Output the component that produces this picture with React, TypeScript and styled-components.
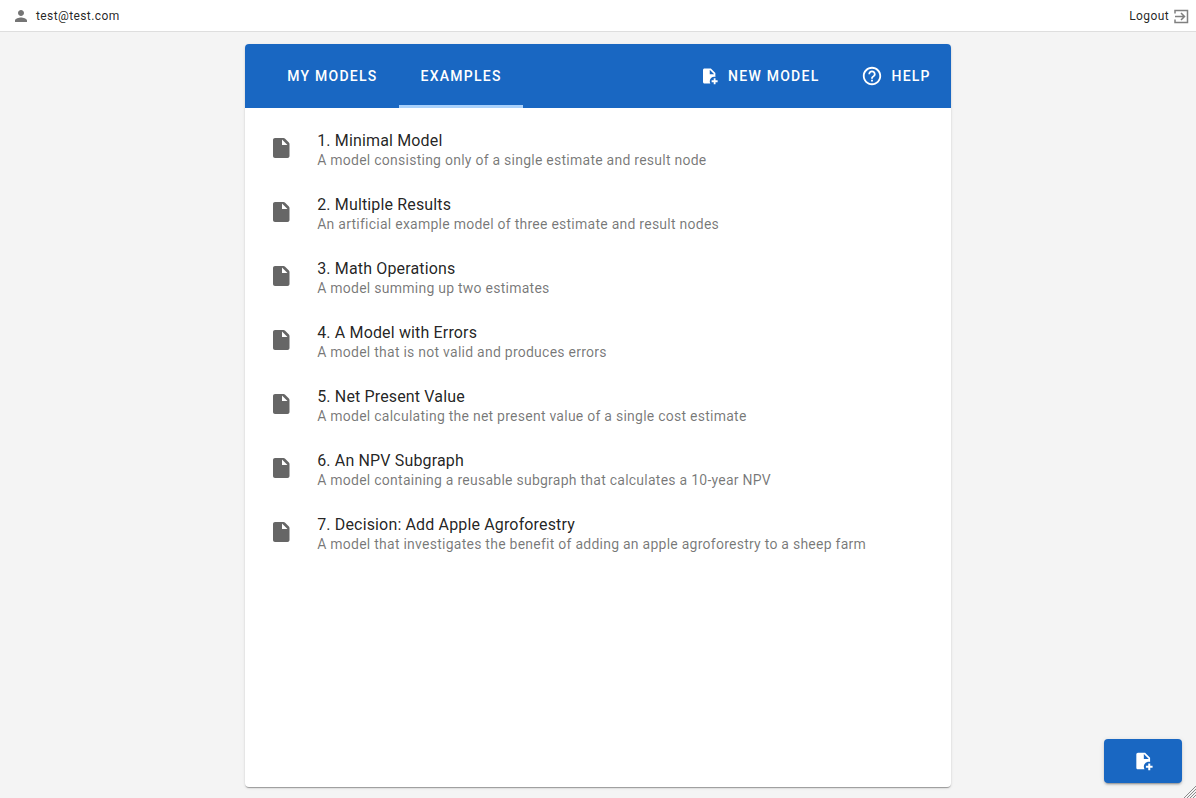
import React, { useState } from "react";
import styled, { createGlobalStyle } from "styled-components";

const GlobalStyle = createGlobalStyle`
  *, *::before, *::after { box-sizing: border-box; }
  html, body, #root { height: 100%; }
  body {
    margin: 0;
    background: #f4f4f4;
    color: rgba(0, 0, 0, 0.87);
    font-family: Roboto, "Liberation Sans", sans-serif;
    -webkit-font-smoothing: antialiased;
  }
`;

const Page = styled.div`
  display: flex;
  flex-direction: column;
  min-height: 100%;
`;

const TopBar = styled.header`
  display: flex;
  align-items: center;
  justify-content: space-between;
  height: 32px;
  padding: 0 6px 0 12px;
  background: #fff;
  border-bottom: 1px solid #dedede;
`;

const Account = styled.div`
  display: flex;
  align-items: center;
  gap: 6px;
  font-size: 12px;
  line-height: 20px;
  letter-spacing: 0.4px;
`;

const LogoutButton = styled.button`
  display: flex;
  align-items: center;
  gap: 3px;
  padding: 0;
  border: 0;
  background: none;
  color: inherit;
  font: inherit;
  letter-spacing: inherit;
  cursor: pointer;
`;

const Glyph = styled.svg<{ $size: number; $color?: string }>`
  display: block;
  flex: none;
  width: ${(p) => p.$size}px;
  height: ${(p) => p.$size}px;
  fill: ${(p) => p.$color ?? "currentColor"};
`;

const Main = styled.main`
  display: flex;
  flex: 1;
  justify-content: center;
  padding: 12px 0 11px;
`;

const Card = styled.section`
  display: flex;
  flex-direction: column;
  width: 59%;
  min-width: 640px;
  border-radius: 4px;
  background: #fff;
  overflow: hidden;
  box-shadow: 0 2px 1px -1px rgba(0, 0, 0, 0.2), 0 1px 1px rgba(0, 0, 0, 0.14),
    0 1px 3px rgba(0, 0, 0, 0.12);
`;

const CardHeader = styled.div`
  display: flex;
  justify-content: space-between;
  height: 64px;
  padding-left: 20px;
  background: #1967c2;
  color: #fff;
`;

const Group = styled.nav`
  display: flex;
`;

const HeaderButton = styled.button`
  display: flex;
  align-items: center;
  gap: 8px;
  padding: 0 20px 0 22px;
  border: 0;
  background: none;
  color: inherit;
  font: 500 14px/20px Roboto, "Liberation Sans", sans-serif;
  letter-spacing: 1.25px;
  text-transform: uppercase;
  cursor: pointer;
`;

const TabButton = styled(HeaderButton)<{ $active: boolean }>`
  padding-right: 21px;
  box-shadow: ${(p) => (p.$active ? "inset 0 -3px #a9d1fb" : "none")};
`;

const IconSlot = styled.span`
  display: flex;
  justify-content: center;
  width: 22px;
`;

const ModelList = styled.ul`
  margin: 0;
  padding: 8px 0;
  list-style: none;
`;

const ModelLink = styled.a`
  display: flex;
  align-items: center;
  gap: 24px;
  height: 64px;
  padding: 0 24px;
  color: inherit;
  text-decoration: none;
`;

const ModelText = styled.div`
  display: flex;
  flex-direction: column;
  padding-top: 4px;
`;

const ModelTitle = styled.span`
  font-size: 16px;
  line-height: 20px;
  letter-spacing: 0.15px;
`;

const ModelSummary = styled.span`
  color: rgba(0, 0, 0, 0.54);
  font-size: 14px;
  line-height: 18px;
  letter-spacing: 0.25px;
`;

const FloatingButton = styled.button`
  position: fixed;
  right: 14px;
  bottom: 15px;
  display: flex;
  align-items: center;
  justify-content: center;
  width: 78px;
  height: 44px;
  border: 0;
  border-radius: 4px;
  background: #1967c2;
  color: #fff;
  cursor: pointer;
  box-shadow: 0 3px 1px -2px rgba(0, 0, 0, 0.2), 0 2px 2px rgba(0, 0, 0, 0.14),
    0 1px 5px rgba(0, 0, 0, 0.12);
`;

const ResizeGrip = styled.svg`
  position: fixed;
  right: 0;
  bottom: 0;
  width: 12px;
  height: 12px;
`;

const PATHS = {
  user: "M12 12c2.21 0 4-1.79 4-4s-1.79-4-4-4-4 1.79-4 4 1.79 4 4 4zm0 2c-2.67 0-8 1.34-8 4v2h16v-2c0-2.66-5.33-4-8-4z",
  help: "M11 18h2v-2h-2v2zm1-16C6.48 2 2 6.48 2 12s4.48 10 10 10 10-4.48 10-10S17.52 2 12 2zm0 18c-4.41 0-8-3.59-8-8s3.59-8 8-8 8 3.59 8 8-3.59 8-8 8zm0-14c-2.21 0-4 1.79-4 4h2c0-1.1.9-2 2-2s2 .9 2 2c0 2-3 1.75-3 5h2c0-2.25 3-2.5 3-5 0-2.21-1.79-4-4-4z",
  file: "M6 2c-1.1 0-2 .9-2 2v16c0 1.1.9 2 2 2h12.5c1.1 0 2-.9 2-2V8c0-.5-.2-1-.6-1.4l-4-4C15.5 2.2 15 2 14.5 2H6zM13 9V3.5L18.5 9H13z",
  filePlus:
    "M6 2C4.9 2 4 2.9 4 4V20C4 21.1 4.9 22 6 22H13.8C13.3 21.1 13 20 13 19C13 15.7 15.7 13 19 13C19.5 13 20 13.1 20.5 13.2V8L14.5 2H6M13 9.5V3.5L19 9.5H13M23.5 20.2H20.7V23H18.3V20.2H15.5V17.8H18.3V15H20.7V17.8H23.5V20.2Z",
};

type IconProps = { name: keyof typeof PATHS; size: number; color?: string };

const Icon = ({ name, size, color }: IconProps) => (
  <Glyph viewBox="0 0 24 24" $size={size} $color={color} aria-hidden="true">
    <path fillRule="evenodd" d={PATHS[name]} />
  </Glyph>
);

const models = [
  ["1. Minimal Model", "A model consisting only of a single estimate and result node"],
  ["2. Multiple Results", "An artificial example model of three estimate and result nodes"],
  ["3. Math Operations", "A model summing up two estimates"],
  ["4. A Model with Errors", "A model that is not valid and produces errors"],
  ["5. Net Present Value", "A model calculating the net present value of a single cost estimate"],
  ["6. An NPV Subgraph", "A model containing a reusable subgraph that calculates a 10-year NPV"],
  ["7. Decision: Add Apple Agroforestry", "A model that investigates the benefit of adding an apple agroforestry to a sheep farm"],
];

export default function App() {
  const [tab, setTab] = useState("Examples");
  return (
    <Page>
      <GlobalStyle />
      <TopBar>
        <Account>
          <Icon name="user" size={18} color="#757575" />
          <span>test@test.com</span>
        </Account>
        <Account>
          <LogoutButton type="button">
            Logout
            <Glyph viewBox="0 0 18 18" $size={18} $color="none" aria-hidden="true">
              <path
                d="M3 6.5V3.5h12.5v12H3v-3M3 9.5h9M9 6l3.5 3.5L9 13"
                stroke="#808080"
                strokeWidth="1.5"
              />
            </Glyph>
          </LogoutButton>
        </Account>
      </TopBar>
      <Main>
        <Card>
          <CardHeader>
            <Group aria-label="Models">
              {["My Models", "Examples"].map((name) => (
                <TabButton key={name} type="button" $active={tab === name} onClick={() => setTab(name)}>
                  {name}
                </TabButton>
              ))}
            </Group>
            <Group aria-label="Actions">
              <HeaderButton type="button">
                <IconSlot>
                  <Icon name="filePlus" size={18} />
                </IconSlot>
                New Model
              </HeaderButton>
              <HeaderButton type="button">
                <IconSlot>
                  <Icon name="help" size={22} />
                </IconSlot>
                Help
              </HeaderButton>
            </Group>
          </CardHeader>
          <ModelList>
            {models.map(([title, summary]) => (
              <li key={title}>
                <ModelLink href="#">
                  <Icon name="file" size={24} color="#666" />
                  <ModelText>
                    <ModelTitle>{title}</ModelTitle>
                    <ModelSummary>{summary}</ModelSummary>
                  </ModelText>
                </ModelLink>
              </li>
            ))}
          </ModelList>
        </Card>
      </Main>
      <FloatingButton type="button" aria-label="New model">
        <Icon name="filePlus" size={20} />
      </FloatingButton>
      <ResizeGrip viewBox="0 0 12 12" aria-hidden="true">
        <path d="M0 12L12 0M3 12l9-9M6 12l6-6M9 12l3-3" stroke="#8a8a8a" fill="none" />
      </ResizeGrip>
    </Page>
  );
}
